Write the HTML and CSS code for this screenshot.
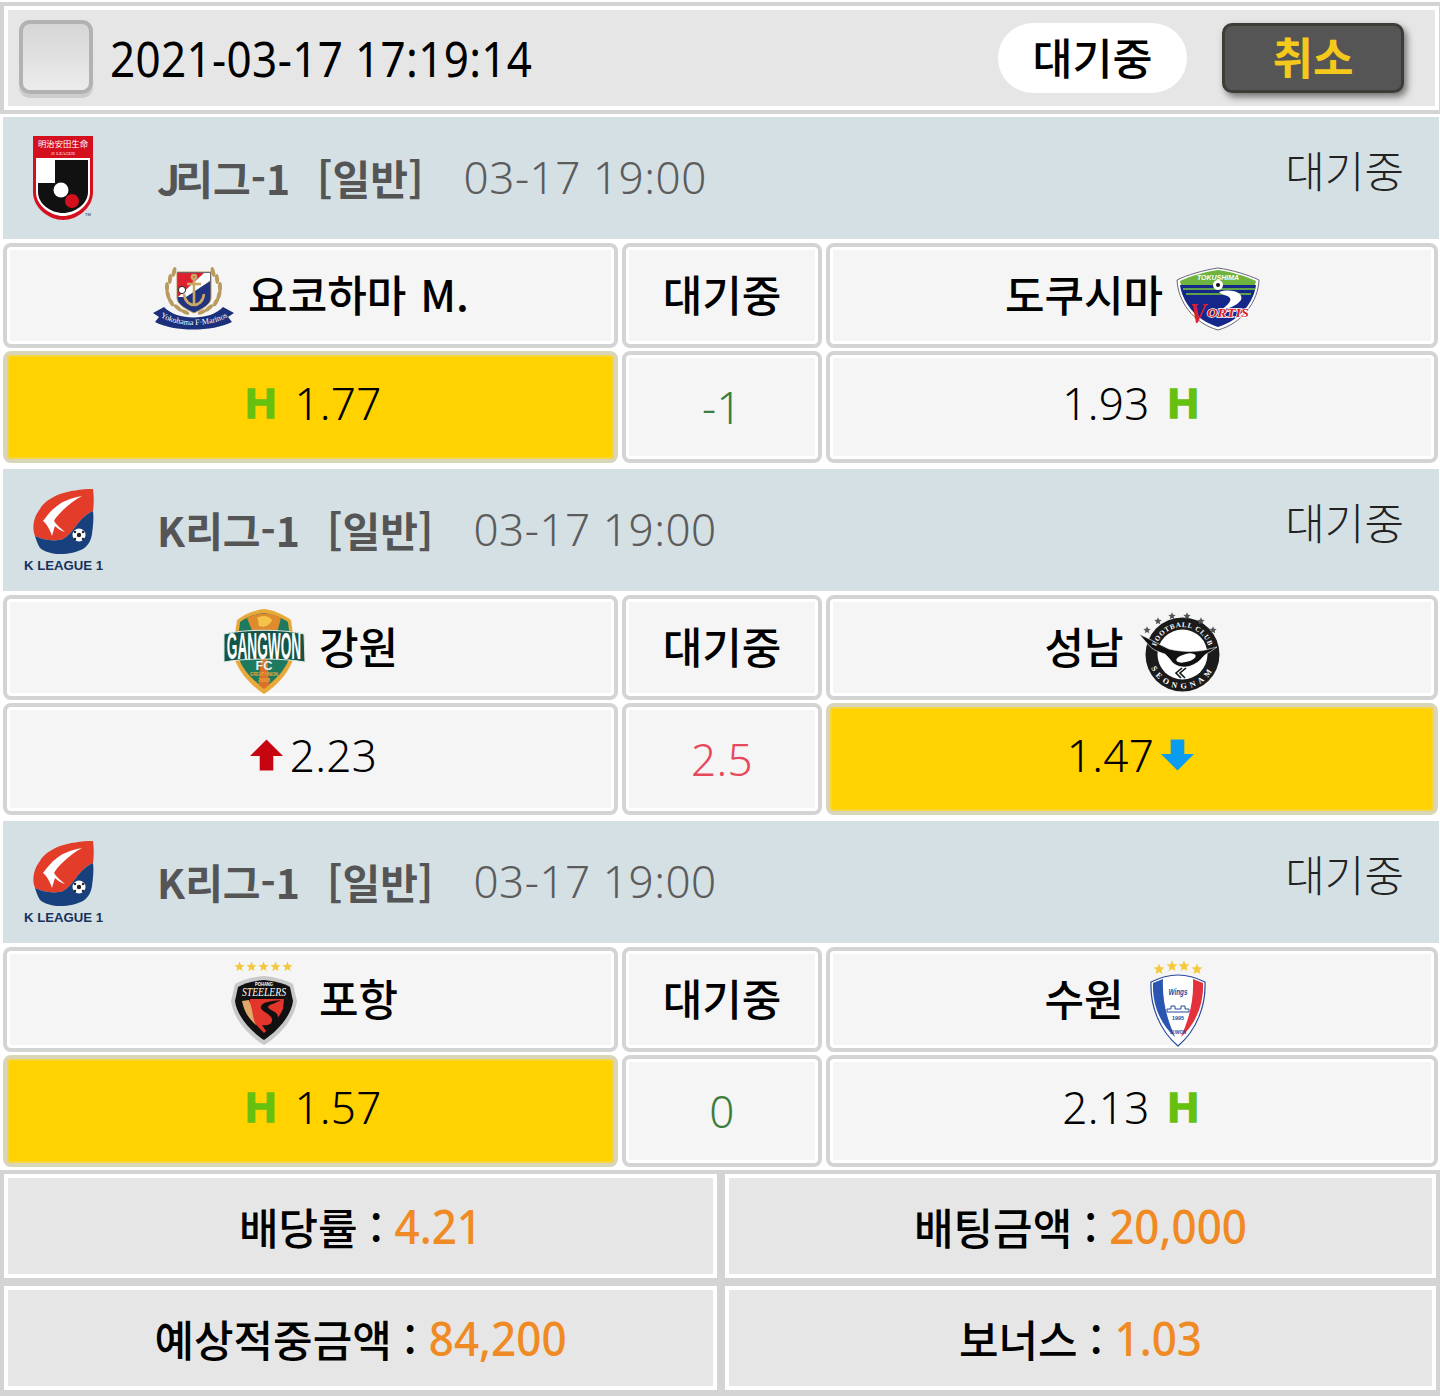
FILE: index.html
```html
<!DOCTYPE html>
<html lang="ko">
  <head>
    <meta charset="UTF-8" />
    <meta name="viewport" content="width=device-width, initial-scale=1.0" />
    <title>배팅내역</title>
    <link rel="stylesheet" href="styles.css">
  </head>
  <body>
    <svg class="defs" width="0" height="0">
      <symbol id="star" viewBox="-6 -6 12 12" overflow="visible">
        <path d="M0 -5.5 1.6 -1.7 5.5 -1.4 2.5 1.1 3.4 5 0 2.9 -3.4 5 -2.5 1.1 -5.5 -1.4 -1.6 -1.7Z" />
      </symbol>
      <symbol id="kleague" viewBox="0 0 82 84">
        <path d="M70 1C58 1 46 3 37 6C27 10 20 15 17 21C12 27 8 38 12 48C20 52 32 54 40 51C44 49 46 46 49 43C54 37 60 27 70 23C71 16 71 8 70 1Z" fill="#e33c28" />
        <path d="M70 23C60 27 54 37 49 43C46 46 44 49 40 51C32 54 20 52 12 48C14 55 16 58 17 60C22 64 30 66 37 66C46 66 54 64 60 61C66 57 68 52 69 46C70 38 71 30 70 23Z" fill="#17407c" />
        <path d="M59 8C48 10 40 13 34 18C28 22 24 28 20 33C24 36 27 42 29 48C30 44 31 41 32 38C35 41 38 43 42 44C37 40 33 36 31 33C34 27 46 15 59 8Z" fill="#fff" />
        <circle cx="56" cy="47" r="6.5" fill="#fff" />
        <circle cx="56" cy="47" r="2.2" fill="#222" />
        <circle cx="52" cy="44" r="1.2" fill="#222" />
        <circle cx="60" cy="44" r="1.2" fill="#222" />
        <circle cx="52" cy="51" r="1.2" fill="#222" />
        <circle cx="60" cy="51" r="1.2" fill="#222" />
        <text class="kl-text" x="1" y="82" textLength="79" lengthAdjust="spacingAndGlyphs">K LEAGUE 1</text>
      </symbol>
    </svg>

    <div class="topbar">
      <div class="check"></div>
      <div class="stamp">2021-03-17 17:19:14</div>
      <div class="pill">대기중</div>
      <div class="cancel">취소</div>
    </div>

    <section class="game">
      <div class="league">
        <svg class="league-logo" viewBox="0 0 82 84">
          <path d="M10 0H70V56C70 72 54 84 40 84C26 84 10 72 10 56Z" fill="#d4101f" />
          <path d="M13 22H67V56C67 70 52 80 40 80C28 80 13 70 13 56Z" fill="#fff" />
          <path d="M15 47H32V24H65V56C65 68 52 77 40 77C28 77 15 68 15 56Z" fill="#111" />
          <circle cx="38" cy="54" r="7.5" fill="#fff" />
          <circle cx="49" cy="65" r="7" fill="#d4101f" />
          <text class="j-name" x="40" y="11" textLength="50" lengthAdjust="spacingAndGlyphs">明治安田生命</text>
          <text class="j-sub" x="40" y="19" textLength="24" lengthAdjust="spacingAndGlyphs">J1 LEAGUE</text>
          <text class="j-tm" x="62" y="80">TM</text>
        </svg>
        <div class="title"><span class="tight">J</span>리그-1  [일반]</div>
        <div class="date">03-17 19:00</div>
        <div class="status">대기중</div>
      </div>
      <div class="row names">
        <div class="cell">
          <svg class="team-logo" viewBox="0 0 82 90">
            <g id="laurel" fill="#b99a5e">
              <ellipse cx="22" cy="21" rx="2" ry="5" transform="rotate(15 22 21)" />
              <ellipse cx="18" cy="28" rx="2" ry="5" transform="rotate(5 18 28)" />
              <ellipse cx="15" cy="36" rx="2" ry="5" />
              <ellipse cx="16" cy="44" rx="2" ry="5" transform="rotate(-15 16 44)" />
              <ellipse cx="19" cy="51" rx="2" ry="5" transform="rotate(-30 19 51)" />
              <ellipse cx="26" cy="57" rx="2" ry="5" transform="rotate(-50 26 57)" />
              <ellipse cx="33" cy="61" rx="2" ry="4.5" transform="rotate(-65 33 61)" />
            </g>
            <use href="#laurel" transform="matrix(-1 0 0 1 83 0)" />
            <path d="M25 21H59V47C59 54 48 59 42 62C36 59 25 54 25 47Z" fill="#22347f" stroke="#b99a5e" />
            <path d="M26 22H52L26 46Z" fill="#dd1f2e" />
            <path d="M52 22H58V30L34 46L26 46Z" fill="#fff" />
            <g fill="none" stroke="#c9a765" stroke-width="2.6">
              <path d="M42 27V53" />
              <path d="M35 33H49" />
              <path d="M32 43C33 51 38 54 42 54C46 54 51 51 52 43" />
              <circle cx="42" cy="26" r="2" />
            </g>
            <circle cx="30" cy="39" r="3.6" fill="#fff" stroke="#222" />
            <path d="M1 62 12 56C25 70 58 70 71 56L82 62 76 66 80 71C60 81 22 81 3 71L7 66Z" fill="#1c2f7a" />
            <path id="yk-arc" d="M7 65C25 77 58 77 77 65" fill="none" />
            <text class="yk-text"><textPath href="#yk-arc" startOffset="50%">Yokohama F·Marinos</textPath></text>
          </svg>
          <span>요코하마 M.</span>
        </div>
        <div class="cell mid"><span>대기중</span></div>
        <div class="cell">
          <span>도쿠시마</span>
          <svg class="team-logo" viewBox="0 0 82 90">
            <path d="M41 17C55 19 72 24 82 29C81 50 66 72 41 79C16 72 1 50 0 29C10 24 27 19 41 17Z" fill="#fff" stroke="#667" />
            <path d="M41 19C54 21 69 25 79 30L78 34H4L3 30C13 25 28 21 41 19Z" fill="#6fb33f" />
            <path d="M3 34H79C77 50 64 69 41 76C18 69 5 50 3 34Z" fill="#16278a" />
            <path d="M6 37H78V39H6ZM9 42H74V44H9Z" fill="#5ea34a" />
            <path d="M42 41C55 37 67 42 64 49C60 55 50 58 44 59C51 54 56 49 52 46C49 44 45 44 42 41Z" fill="#fff" />
            <circle cx="41" cy="34" r="5" fill="#fff" />
            <circle cx="41" cy="34" r="2" fill="#111" />
            <text class="tk-top" x="41" y="29" textLength="42" lengthAdjust="spacingAndGlyphs">TOKUSHIMA</text>
            <text class="tk-v" transform="translate(13 72) scale(0.8 1)">V</text>
            <text class="tk-name" x="30" y="66" textLength="42" lengthAdjust="spacingAndGlyphs">ORTIS</text>
          </svg>
        </div>
      </div>
      <div class="row odds">
        <div class="cell picked gap-h"><span class="mark-h">H</span><span class="num">1.77</span></div>
        <div class="cell mid-val green"><span class="num">-1</span></div>
        <div class="cell gap-h"><span class="num">1.93</span><span class="mark-h">H</span></div>
      </div>
    </section>

    <section class="game">
      <div class="league">
        <svg class="league-logo"><use href="#kleague" /></svg>
        <div class="title">K리그-1  [일반]</div>
        <div class="date">03-17 19:00</div>
        <div class="status">대기중</div>
      </div>
      <div class="row names">
        <div class="cell">
          <svg class="team-logo" viewBox="0 0 82 90">
            <path d="M41 6C50 7 60 11 68 17L72 45C72 64 55 82 41 91C27 82 10 64 10 45L14 17C22 11 32 7 41 6Z" fill="#e9a93a" />
            <path d="M41 10C49 11 58 14 65 19L68 45C68 62 53 77 41 85C29 77 14 62 14 45L17 19C24 14 33 11 41 10Z" fill="#1d7a5e" />
            <path d="M38 50H44L46 82L41 86L36 82Z" fill="#d9712b" />
            <path d="M24 15C36 9 48 9 58 15L54 30H30Z" fill="#e08a2e" />
            <path d="M34 15C38 12 46 12 49 17C47 23 40 25 36 23C35 20 36 18 34 15Z" fill="#f4c34a" />
            <path d="M1 31C22 26 60 26 81 31L82 59C60 55 22 55 1 59Z" fill="#155548" stroke="#dfe9e6" />
            <text class="gw-name" transform="translate(41 56) scale(0.38 1)">GANGWON</text>
            <text class="gw-fc" x="41" y="67" textLength="17" lengthAdjust="spacingAndGlyphs">FC</text>
            <text class="gw-sub" x="41" y="73" textLength="28" lengthAdjust="spacingAndGlyphs">GREAT UNION</text>
            <text class="gw-sub" x="41" y="79" textLength="12" lengthAdjust="spacingAndGlyphs">2008</text>
          </svg>
          <span>강원</span>
        </div>
        <div class="cell mid"><span>대기중</span></div>
        <div class="cell">
          <span>성남</span>
          <svg class="team-logo" viewBox="0 0 82 90">
            <circle cx="44.5" cy="51.5" r="37" fill="#1b1b1b" />
            <circle cx="44.5" cy="51.5" r="25" fill="#fff" />
            <g fill="#555">
              <use href="#star" x="5" y="23" width="8" height="8" />
              <use href="#star" x="16" y="14" width="8" height="8" />
              <use href="#star" x="30" y="9" width="8" height="8" />
              <use href="#star" x="45" y="9" width="8" height="8" />
              <use href="#star" x="59" y="14" width="8" height="8" />
              <use href="#star" x="71" y="23" width="8" height="8" />
            </g>
            <path d="M1 31C10 35 22 42 31 46C42 49 58 49 67 47L79 44L72 49C66 51 64 56 60 59C54 63 50 64 46 64C40 64 36 61 34 59C31 55 29 53 27 51C20 49 14 46 11 42.5Z" fill="#111" stroke="#fff" stroke-width="0.6" />
            <ellipse cx="48" cy="55" rx="10" ry="4" transform="rotate(-15 48 55)" fill="#fff" />
            <g fill="none" stroke="#111" stroke-width="1.6">
              <path d="M44 65 38 70 43 75" />
              <path d="M48 65 42 70 47 75" />
            </g>
            <path id="sn-top" d="M17 51.5A27.5 27.5 0 0 1 72 51.5" fill="none" />
            <path id="sn-bot" d="M10.5 51.5A34 34 0 0 0 78.5 51.5" fill="none" />
            <text class="sn-top"><textPath href="#sn-top" startOffset="50%">FOOTBALL CLUB</textPath></text>
            <text class="sn-bot"><textPath href="#sn-bot" startOffset="50%">SEONGNAM</textPath></text>
          </svg>
        </div>
      </div>
      <div class="row odds">
        <div class="cell gap-arrow">
          <svg class="arrow" viewBox="0 0 34 32"><path d="M17 0 34 17H24V32H10V17H0Z" fill="#c70510" /></svg>
          <span class="num">2.23</span>
        </div>
        <div class="cell mid-val red"><span class="num">2.5</span></div>
        <div class="cell picked gap-arrow">
          <span class="num">1.47</span>
          <svg class="arrow" viewBox="0 0 34 32"><path d="M10 0H24V15H34L17 32 0 15H10Z" fill="#0a9cf0" /></svg>
        </div>
      </div>
    </section>

    <section class="game">
      <div class="league">
        <svg class="league-logo"><use href="#kleague" /></svg>
        <div class="title">K리그-1  [일반]</div>
        <div class="date">03-17 19:00</div>
        <div class="status">대기중</div>
      </div>
      <div class="row names">
        <div class="cell">
          <svg class="team-logo" viewBox="0 0 82 90">
            <g fill="#f5c93e">
              <use href="#star" x="11" y="6" width="11" height="11" />
              <use href="#star" x="23" y="6" width="11" height="11" />
              <use href="#star" x="35" y="6" width="11" height="11" />
              <use href="#star" x="47" y="6" width="11" height="11" />
              <use href="#star" x="59" y="6" width="11" height="11" />
            </g>
            <path d="M41 21C52 22 63 25 70 29L74 46C72 64 55 82 41 90C27 82 10 64 8 46L12 29C19 25 30 22 41 21Z" fill="#c9c9c9" />
            <path d="M41 25C51 26 60 28 67 32L70 46C68 62 53 77 41 85C29 77 14 62 12 46L15 32C22 28 31 26 41 25Z" fill="#111" />
            <path d="M27 44H61L60 54C56 63 48 72 41 78C37 74 33 70 30 66C27 58 27 50 27 44Z" fill="#e2352b" />
            <path d="M58 45C48 46 40 47 38 51C36 57 50 58 49 66C48 70 44 71 39 70C41 73 42 74 43 76C50 73 55 68 55 62C55 56 45 55 45 52C46 49 52 49 58 45Z" fill="#111" />
            <path d="M19 46C21 56 25 63 33 70C29 62 30 54 26 45Z" fill="#e0a96b" />
            <text class="ph-sub" x="41" y="31" textLength="18" lengthAdjust="spacingAndGlyphs">POHANG</text>
            <text class="ph-name" x="41" y="41" textLength="44" lengthAdjust="spacingAndGlyphs">STEELERS</text>
          </svg>
          <span>포항</span>
        </div>
        <div class="cell mid"><span>대기중</span></div>
        <div class="cell">
          <span>수원</span>
          <svg class="team-logo" viewBox="1 0 82 90">
            <g fill="#f5c93e">
              <use href="#star" x="16" y="8" width="12" height="12" />
              <use href="#star" x="29" y="5" width="12" height="12" />
              <use href="#star" x="41" y="5" width="12" height="12" />
              <use href="#star" x="54" y="8" width="12" height="12" />
            </g>
            <path d="M41 20C50 20 60 23 68 27C69 50 60 75 41 91C22 75 13 50 14 27C22 23 32 20 41 20Z" fill="#fff" stroke="#27489a" stroke-width="1.2" />
            <path d="M16 28 26 24C25 46 30 64 38 82C24 70 15 50 16 28Z" fill="#2a55b0" />
            <path d="M66 28 56 24C57 46 52 64 44 82C58 70 67 50 66 28Z" fill="#e3323c" />
            <text class="sw-wings" x="41" y="40" textLength="19" lengthAdjust="spacingAndGlyphs">Wings</text>
            <path d="M30 54H34V51H38V54H44V51H48V54H52V57H30Z" fill="none" stroke="#27489a" />
            <text class="sw-year" x="41" y="65" textLength="12" lengthAdjust="spacingAndGlyphs">1995</text>
            <text class="sw-year" x="41" y="79" textLength="16" lengthAdjust="spacingAndGlyphs">SUWON</text>
          </svg>
        </div>
      </div>
      <div class="row odds">
        <div class="cell picked gap-h"><span class="mark-h">H</span><span class="num">1.57</span></div>
        <div class="cell mid-val green"><span class="num">0</span></div>
        <div class="cell gap-h"><span class="num">2.13</span><span class="mark-h">H</span></div>
      </div>
    </section>

    <div class="summary">
      <div class="sum-cell">배당률 : <span class="amount">4.21</span></div>
      <div class="sum-cell">배팅금액 : <span class="amount">20,000</span></div>
      <div class="sum-cell">예상적중금액 : <span class="amount">84,200</span></div>
      <div class="sum-cell">보너스 : <span class="amount">1.03</span></div>
    </div>
  </body>
</html>
```

FILE: styles.css
```css
* {
  box-sizing: border-box;
}

body {
  margin: 0;
  padding: 0;
  height: 1396px;
  overflow: hidden;
  background: #fff;
  color: #000;
  font-family: "Noto Sans CJK KR", sans-serif;
}

.defs {
  display: none;
}

.topbar {
  display: flex;
  align-items: center;
  height: 112px;
  margin-top: 2px;
  padding: 0 35px 0 19px;
  background: #e6e6e6;
  border: 4px solid #d4d4d4;
  border-right-width: 1px;
  box-shadow: inset 0 0 0 4px #fff;
}

.check {
  width: 74px;
  height: 74px;
  margin-left: -4px;
  margin-top: -2px;
  border: 4px solid #b2b2b2;
  border-radius: 11px;
  background: linear-gradient(#d6d6d6, #ececec);
  box-shadow: 0 4px 0 #cdcdcd;
}

.stamp {
  margin-left: 17px;
  font-family: "Noto Sans", sans-serif;
  font-size: 44px;
  font-weight: 400;
  letter-spacing: 0.35px;
  transform: scaleY(1.1);
}

.pill {
  width: 189px;
  height: 70px;
  margin-left: auto;
  border-radius: 35px;
  background: #fff;
  font-size: 43.5px;
  font-weight: 500;
  line-height: 68px;
  text-align: center;
}

.cancel {
  width: 182px;
  height: 70px;
  margin-left: 35px;
  background: #555;
  border: 3px solid #3d3d38;
  border-radius: 10px;
  box-shadow: 3px 4px 7px rgba(0, 0, 0, 0.5);
  color: #f5c91c;
  font-size: 44px;
  font-weight: 700;
  line-height: 60px;
  text-align: center;
}

.game {
  margin: 3px 1px 0 3px;
}

.game + .game {
  margin-top: 6px;
}

.league {
  display: flex;
  align-items: center;
  height: 122px;
  padding: 0 35px 0 20px;
  background: #d4e0e4;
}

.league-logo {
  flex: none;
  width: 82px;
  height: 84px;
  margin-right: 52px;
}

.title {
  margin-top: -3px;
  color: #555;
  font-size: 41px;
  font-weight: 700;
  white-space: pre;
  word-spacing: 2px;
}

.tight {
  letter-spacing: -5px;
}

.date {
  margin-left: 40px;
  margin-top: -2px;
  color: #5c5c5c;
  font-family: "Noto Sans", sans-serif;
  font-size: 44px;
  font-weight: 300;
  letter-spacing: 0.55px;
}

.status {
  margin-left: auto;
  margin-top: -19px;
  color: #222;
  font-size: 43px;
  font-weight: 300;
}

.row {
  display: grid;
  grid-template-columns: 615px 200px 612px;
  gap: 4px;
  margin-top: 4px;
}

.names {
  height: 105px;
}

.odds {
  height: 112px;
  margin-top: 3px;
}

.cell {
  display: flex;
  align-items: center;
  justify-content: center;
  gap: 14px;
  background: #f5f5f5;
  border: 4px solid #d4d4d4;
  border-radius: 8px;
  box-shadow: inset 0 0 0 3px #fff;
  font-size: 43px;
  font-weight: 500;
}

.names .cell span {
  padding-bottom: 5px;
  word-spacing: 2px;
}

.odds .cell {
  padding-bottom: 8px;
}

.odds .cell:first-child {
  padding-left: 6px;
}

.odds .cell:last-child {
  padding-right: 3px;
}

.team-logo {
  flex: none;
  width: 82px;
  height: 90px;
  overflow: visible;
}

.picked {
  background: #ffd200;
  border-color: #d8d5b8;
  box-shadow: inset 0 0 0 2px #f7d53c;
}

.num {
  font-family: "Noto Sans", sans-serif;
  font-size: 44px;
  font-weight: 300;
  letter-spacing: 0.3px;
  line-height: 1;
}

.gap-h {
  gap: 18px;
}

.gap-arrow {
  gap: 7px;
}

.mark-h {
  color: #66c010;
  font-family: "Liberation Sans", sans-serif;
  font-size: 43px;
  font-weight: 700;
  line-height: 1;
  -webkit-text-stroke: 1.5px #66c010;
}

.arrow {
  width: 33px;
  height: 32px;
}

.mid-val .num {
  position: relative;
  top: 4px;
}

.green {
  color: #3c7d3c;
}

.red {
  color: #e8485c;
}

.summary {
  display: grid;
  grid-template-columns: 713px 711px;
  grid-auto-rows: 104px;
  gap: 8px;
  height: 226px;
  margin-top: 3px;
  padding: 4px;
  background: #d4d4d4;
}

.sum-cell {
  display: flex;
  align-items: center;
  justify-content: center;
  background: #e6e6e6;
  border: 4px solid #fff;
  font-size: 43px;
  font-weight: 500;
  white-space: pre;
}

.amount {
  color: #f08a24;
  font-family: "Noto Sans", sans-serif;
  font-size: 44px;
  font-weight: 500;
  transform: scaleY(1.08);
}

/* logo lettering */
.kl-text {
  fill: #17305c;
  font-family: "Liberation Sans", sans-serif;
  font-size: 13px;
  font-weight: 700;
}

.j-name,
.j-sub,
.tk-top,
.gw-name,
.gw-fc,
.gw-sub,
.ph-sub,
.ph-name,
.sw-wings,
.sw-year,
.yk-text,
.sn-top,
.sn-bot {
  text-anchor: middle;
}

.j-name {
  fill: #fff;
  font-family: "Noto Sans CJK JP", sans-serif;
  font-size: 8px;
}

.j-sub {
  fill: #fff;
  font-family: "Liberation Serif", serif;
  font-size: 4px;
}

.j-tm {
  fill: #222;
  font-family: "Liberation Sans", sans-serif;
  font-size: 4px;
}

.yk-text {
  fill: #fff;
  font-family: "Liberation Serif", serif;
  font-size: 8px;
}

.tk-top {
  fill: #fff;
  font-family: "Liberation Sans", sans-serif;
  font-size: 7px;
  font-style: italic;
  font-weight: 700;
}

.tk-v {
  fill: #dd1c2c;
  font-family: "Liberation Serif", serif;
  font-size: 30px;
  font-style: italic;
  font-weight: 700;
}

.tk-name {
  fill: #dd1c2c;
  stroke: #fff;
  stroke-width: 1.4px;
  paint-order: stroke;
  font-family: "Liberation Serif", serif;
  font-size: 13px;
  font-style: italic;
  font-weight: 700;
}

.gw-name {
  fill: #fff;
  font-family: "Liberation Sans", sans-serif;
  font-size: 36px;
  font-weight: 700;
}

.gw-fc {
  fill: #e8f0ee;
  font-family: "Liberation Sans", sans-serif;
  font-size: 12px;
  font-weight: 700;
}

.gw-sub {
  fill: #e9a93a;
  font-family: "Liberation Sans", sans-serif;
  font-size: 5px;
  font-weight: 700;
}

.sn-top {
  fill: #fff;
  font-family: "Liberation Serif", serif;
  font-size: 7px;
  font-weight: 700;
  letter-spacing: 0.8px;
}

.sn-bot {
  fill: #fff;
  font-family: "Liberation Serif", serif;
  font-size: 8px;
  font-weight: 700;
  letter-spacing: 4px;
}

.ph-sub {
  fill: #fff;
  font-family: "Liberation Sans", sans-serif;
  font-size: 5px;
  font-weight: 700;
}

.ph-name {
  fill: #fff;
  font-family: "Liberation Serif", serif;
  font-size: 12px;
  font-style: italic;
}

.sw-wings {
  fill: #27489a;
  font-family: "Liberation Sans", sans-serif;
  font-size: 9px;
  font-style: italic;
  font-weight: 700;
}

.sw-year {
  fill: #27489a;
  font-family: "Liberation Sans", sans-serif;
  font-size: 6px;
  font-weight: 700;
}
```
